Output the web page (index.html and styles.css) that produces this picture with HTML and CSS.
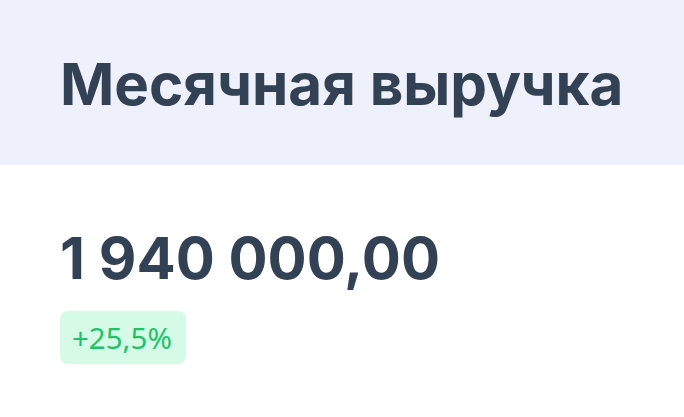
FILE: index.html
```html
<!DOCTYPE html>
<html lang="ru">
<head>
<meta charset="utf-8">
<link rel="stylesheet" href="styles.css">
</head>
<body>
<div class="card">
  <div class="card-header">
    <h2 class="title">Месячная выручка</h2>
  </div>
  <div class="card-body">
    <div class="value">1 940 000,00</div>
    <span class="badge">+25,5%</span>
  </div>
</div>
</body>
</html>
```
FILE: styles.css
```css
html, body { margin: 0; padding: 0; background: #ffffff; }
body { font-family: Inter, "Noto Sans", sans-serif; }
.card { width: 684px; }
.card-header {
  background: #eef0fb;
  height: 165px;
  display: flex;
  align-items: center;
  padding-left: 60px;
  padding-top: 2px;
  box-sizing: border-box;
}
.title {
  margin: 0;
  font-size: 58.3px;
  font-weight: 700;
  color: #334155;
}
.card-body {
  padding: 58px 60px 0;
  display: flex;
  flex-direction: column;
  align-items: flex-start;
}
.value {
  font-size: 58px;
  font-weight: 700;
  color: #334155;
  line-height: 70px;
}
.badge {
  margin-top: 18px;
  background: #d5fbe7;
  color: #1fc26b;
  font-family: "Noto Sans", sans-serif;
  font-size: 29.5px;
  border-radius: 8px;
  height: 53px;
  padding: 0 14px 0 12px;
  display: flex;
  align-items: center;
}
```
